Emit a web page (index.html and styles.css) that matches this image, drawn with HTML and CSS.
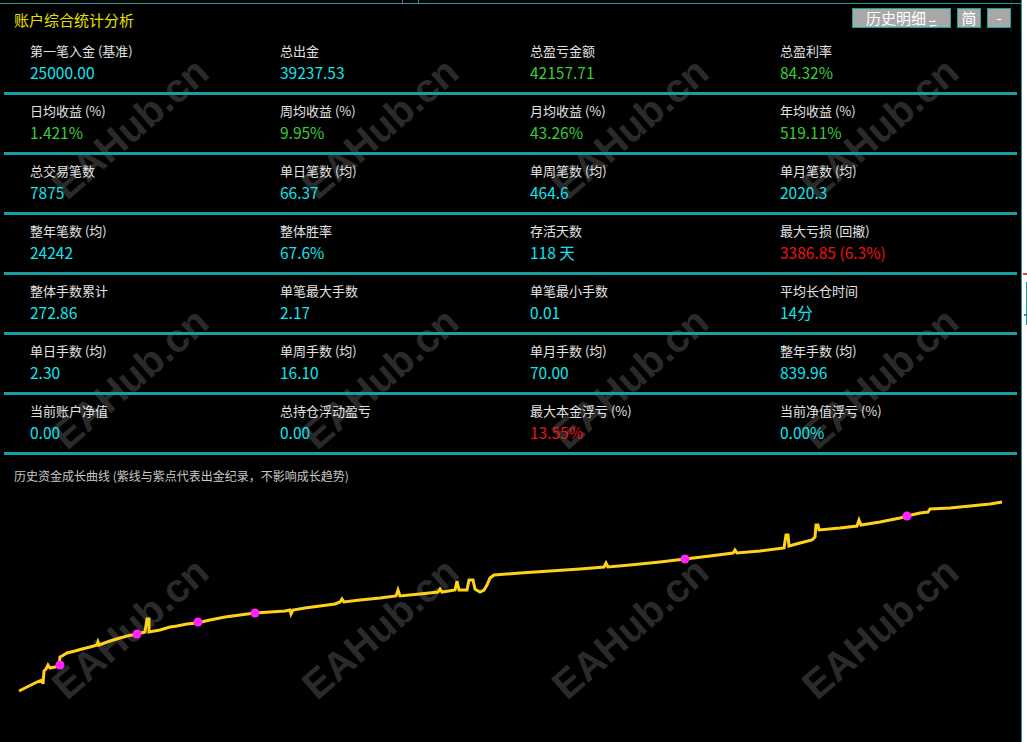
FILE: index.html
```html
<!DOCTYPE html>
<html lang="zh-CN">
<head>
    <meta charset="UTF-8">
    <title>账户综合统计分析</title>
    <link rel="stylesheet" href="styles.css">
</head>
<body>

    <div class="screen">
        <!-- tiny marks left over from the host window -->
        <span class="tick tick-red"></span>
        <span class="tick tick-teal"></span>

        <div class="window">
            <!-- Watermark layer -->
            <div class="watermarks">
                <span>EAHub.cn</span><span>EAHub.cn</span><span>EAHub.cn</span><span>EAHub.cn</span>
                <span>EAHub.cn</span><span>EAHub.cn</span><span>EAHub.cn</span><span>EAHub.cn</span>
                <span>EAHub.cn</span><span>EAHub.cn</span><span>EAHub.cn</span><span>EAHub.cn</span>
            </div>

            <!-- Header -->
            <div class="header">
                <h1 class="title">账户综合统计分析</h1>
                <div class="actions">
                    <button class="btn btn-history">历史明细<svg class="swap-icon" width="8" height="7" viewBox="0 0 8 7"><path d="M0 1.5h6M4.5 0L6.5 1.5M1.5 5.5h6M3 7L1 5.5" stroke="#fff" stroke-width="1" fill="none"/></svg></button>
                    <button class="btn btn-small">简</button>
                    <button class="btn btn-small">-</button>
                </div>
            </div>

            <!-- Stats -->
            <div class="stats-row">
                <div class="stat"><div class="label">第一笔入金 (基准)</div><div class="value cyan">25000.00</div></div>
                <div class="stat"><div class="label">总出金</div><div class="value cyan">39237.53</div></div>
                <div class="stat"><div class="label">总盈亏金额</div><div class="value green">42157.71</div></div>
                <div class="stat"><div class="label">总盈利率</div><div class="value green">84.32%</div></div>
            </div>
            <div class="stats-row">
                <div class="stat"><div class="label">日均收益 (%)</div><div class="value green">1.421%</div></div>
                <div class="stat"><div class="label">周均收益 (%)</div><div class="value green">9.95%</div></div>
                <div class="stat"><div class="label">月均收益 (%)</div><div class="value green">43.26%</div></div>
                <div class="stat"><div class="label">年均收益 (%)</div><div class="value green">519.11%</div></div>
            </div>
            <div class="stats-row">
                <div class="stat"><div class="label">总交易笔数</div><div class="value cyan">7875</div></div>
                <div class="stat"><div class="label">单日笔数 (均)</div><div class="value cyan">66.37</div></div>
                <div class="stat"><div class="label">单周笔数 (均)</div><div class="value cyan">464.6</div></div>
                <div class="stat"><div class="label">单月笔数 (均)</div><div class="value cyan">2020.3</div></div>
            </div>
            <div class="stats-row">
                <div class="stat"><div class="label">整年笔数 (均)</div><div class="value cyan">24242</div></div>
                <div class="stat"><div class="label">整体胜率</div><div class="value cyan">67.6%</div></div>
                <div class="stat"><div class="label">存活天数</div><div class="value cyan">118 天</div></div>
                <div class="stat"><div class="label">最大亏损 (回撤)</div><div class="value red">3386.85 (6.3%)</div></div>
            </div>
            <div class="stats-row">
                <div class="stat"><div class="label">整体手数累计</div><div class="value cyan">272.86</div></div>
                <div class="stat"><div class="label">单笔最大手数</div><div class="value cyan">2.17</div></div>
                <div class="stat"><div class="label">单笔最小手数</div><div class="value cyan">0.01</div></div>
                <div class="stat"><div class="label">平均长仓时间</div><div class="value cyan">14分</div></div>
            </div>
            <div class="stats-row">
                <div class="stat"><div class="label">单日手数 (均)</div><div class="value cyan">2.30</div></div>
                <div class="stat"><div class="label">单周手数 (均)</div><div class="value cyan">16.10</div></div>
                <div class="stat"><div class="label">单月手数 (均)</div><div class="value cyan">70.00</div></div>
                <div class="stat"><div class="label">整年手数 (均)</div><div class="value cyan">839.96</div></div>
            </div>
            <div class="stats-row">
                <div class="stat"><div class="label">当前账户净值</div><div class="value cyan">0.00</div></div>
                <div class="stat"><div class="label">总持仓浮动盈亏</div><div class="value cyan">0.00</div></div>
                <div class="stat"><div class="label">最大本金浮亏 (%)</div><div class="value red">13.55%</div></div>
                <div class="stat"><div class="label">当前净值浮亏 (%)</div><div class="value cyan">0.00%</div></div>
            </div>

            <!-- Growth chart -->
            <p class="caption">历史资金成长曲线 (紫线与紫点代表出金纪录，不影响成长趋势)</p>
            <svg class="chart" width="1018" height="253" viewBox="0 485 1018 253">
                <polyline class="curve" points="19,691 25,688 31,685 37,682 42,680 43,684 44,671 46,669 48,665 50,668 55,667 59,666 60,657 62,656 67,653 75,651 82,649 90,647 97,645 98,642 99,645 110,641 120,638 127,636 137,634 145,632 147,619 149,619 149,632 160,630 170,627 177,626 187,624 197,623 210,620 225,617 240,615 255,613 270,612 285,611 290,610 291,614 293,610 305,608 320,606 335,604 340,602 342,599 344,602 360,600 380,598 396,596 398,590 400,596 420,594 438,592 440,589 442,592 455,590 457,581 459,590 467,590 469,580 473,580 475,589 480,592 484,590 487,585 490,578 494,575 520,573 550,571 580,569 604,567 606,563 608,567 630,565 660,562 685,559 710,556 733,553 735,550 737,553 760,551 784,548 786,535 788,535 789,546 800,543 812,540 815,537 816,525 818,525 819,530 840,528 857,526 859,520 861,525 880,522 900,518 907,516 920,513 928,512 930,509 950,508 970,506 990,504 1002,502"/>
                <circle class="dot" cx="60" cy="665" r="4.5"/>
                <circle class="dot" cx="137" cy="634" r="4.5"/>
                <circle class="dot" cx="198" cy="622" r="4.5"/>
                <circle class="dot" cx="255" cy="613" r="4.5"/>
                <circle class="dot" cx="685" cy="559" r="4.5"/>
                <circle class="dot" cx="907" cy="516" r="4.5"/>
            </svg>
        </div>
    </div>

    <!-- marks on the white strip at the right -->
    <span class="edge edge-red"></span>
    <span class="edge edge-bar"></span>
    <span class="edge edge-nub"></span>

</body>
</html>
```

FILE: styles.css
```css
body {
    margin: 0;
    background-color: #fff;
    font-family: "Noto Sans CJK SC", "Liberation Sans", sans-serif;
    position: relative;
    height: 742px;
    overflow: hidden;
}

/* Outer black frame */
.screen {
    width: 1022px;
    height: 742px;
    padding-top: 3px;
    box-sizing: border-box;
    background-color: #000;
    border-right: 1px solid #17a0a0;
    position: relative;
    overflow: hidden;
}

.tick {
    position: absolute;
    top: 0;
    width: 1px;
    height: 3px;
}

.tick-red {
    left: 402px;
    background-color: #e84040;
}

.tick-teal {
    left: 418px;
    background-color: #17a0a0;
}

.window {
    border-top: 1px solid #17a0a0;
    position: relative;
    height: 738px;
    overflow: hidden;
}

/* Watermark */
.watermarks {
    position: absolute;
    left: 5px;
    top: -1px;
    display: grid;
    grid-template-columns: repeat(4, 250px);
    grid-template-rows: repeat(3, 250px);
    pointer-events: none;
}

.watermarks span {
    display: flex;
    align-items: center;
    justify-content: center;
    font-family: "Liberation Sans", sans-serif;
    font-weight: bold;
    font-size: 40px;
    color: #2a2a2a;
    transform: rotate(-41deg);
    white-space: nowrap;
}

/* Header */
.header {
    position: relative;
    display: flex;
    justify-content: space-between;
    align-items: flex-start;
    height: 31px;
    padding: 0 10px 0 14px;
}

.title {
    margin: 0;
    font-size: 15px;
    font-weight: normal;
    line-height: 31px;
    color: #e6e000;
}

.actions {
    display: flex;
    gap: 6px;
    margin-top: 4px;
}

.btn {
    height: 20px;
    box-sizing: border-box;
    padding: 0;
    border: 1px solid #17a0a0;
    background-color: #a8a8a8;
    color: #fff;
    font-family: "Noto Sans CJK SC", sans-serif;
    font-size: 15px;
    line-height: 18px;
}

.btn-history {
    width: 99px;
    text-align: left;
    padding-left: 13px;
}

.swap-icon {
    margin-left: 3px;
    vertical-align: -3px;
}

.btn-small {
    width: 24px;
}

/* Stat rows */
.stats-row {
    position: relative;
    display: grid;
    grid-template-columns: repeat(4, 250px);
    height: 60px;
    box-sizing: border-box;
    margin: 0 4px;
    padding: 6px 0 0 26px;
    border-bottom: 3px solid #17a0a0;
}

.label {
    font-size: 13px;
    line-height: 20px;
    color: #e2e2e2;
    white-space: nowrap;
}

.value {
    font-size: 15.5px;
    line-height: 22px;
    white-space: nowrap;
}

.cyan {
    color: #12e4ee;
}

.green {
    color: #38cc38;
}

.red {
    color: #ec1515;
}

/* Chart */
.caption {
    position: relative;
    margin: 12px 0 0 14px;
    font-size: 12px;
    line-height: 18px;
    color: #c8c8c8;
}

.chart {
    position: relative;
    display: block;
}

.curve {
    fill: none;
    stroke: #ffd21a;
    stroke-width: 3;
}

.dot {
    fill: #ff22ff;
}

/* Marks on the right strip */
.edge {
    position: absolute;
}

.edge-red {
    left: 1023px;
    top: 273px;
    width: 4px;
    height: 2px;
    background-color: #e84040;
}

.edge-bar {
    left: 1026px;
    top: 282px;
    width: 1px;
    height: 43px;
    background-color: #17a0a0;
}

.edge-nub {
    left: 1024px;
    top: 314px;
    width: 2px;
    height: 2px;
    background-color: #17a0a0;
}
```
